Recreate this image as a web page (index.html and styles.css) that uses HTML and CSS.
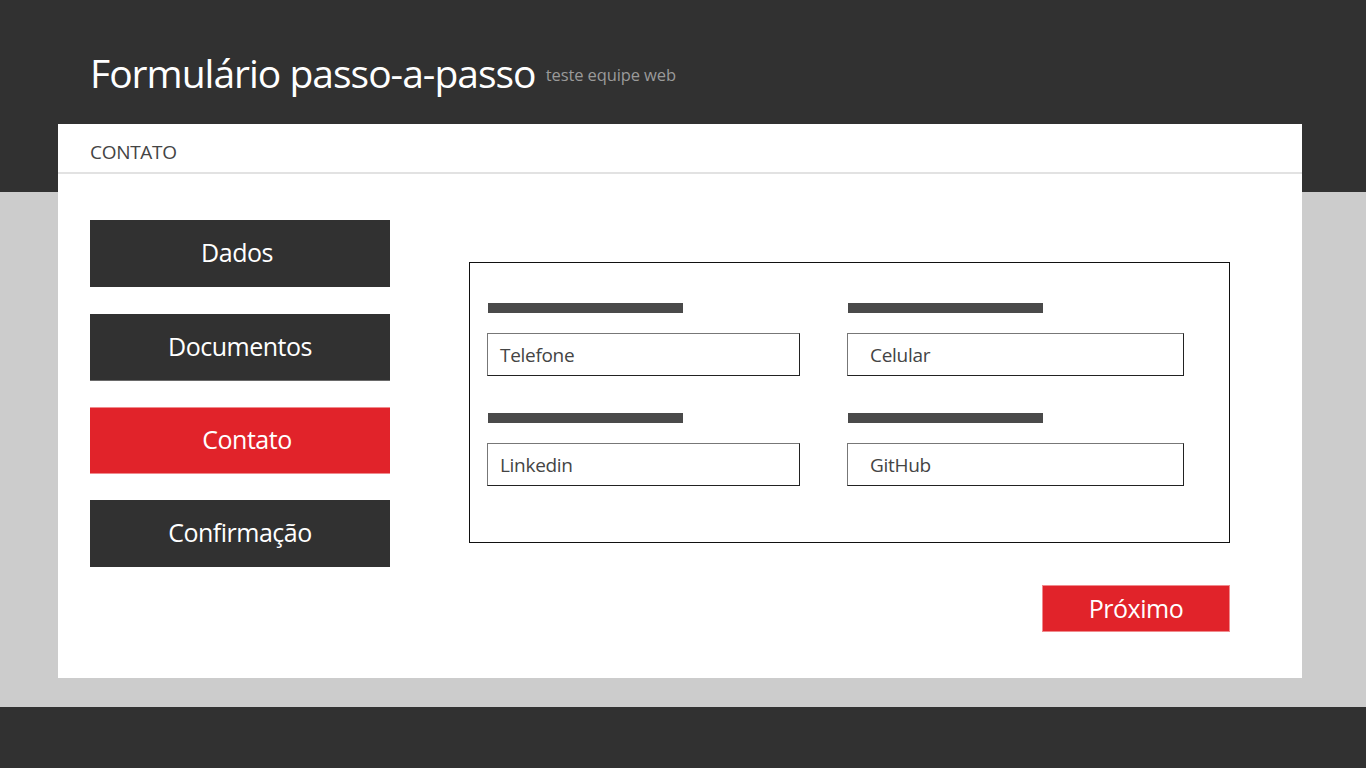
FILE: index.html
```html
<!DOCTYPE html>
<html lang="pt">
<head>
<meta charset="utf-8">
<title>Formulário passo-a-passo</title>
<link rel="stylesheet" href="styles.css">
</head>
<body>
<div class="page">
  <header class="top">
    <h1 class="title">Formulário passo-a-passo <small class="subtitle">teste equipe web</small></h1>
  </header>
  <main class="middle">
    <section class="card">
      <div class="card-head">CONTATO</div>
      <div class="card-body">
        <nav class="steps">
          <a class="step first">Dados</a>
          <a class="step">Documentos</a>
          <a class="step active">Contato</a>
          <a class="step">Confirmação</a>
        </nav>
        <div class="content">
          <form class="form-box">
            <div class="field">
              <span class="label-bar"></span>
              <div class="input">Telefone</div>
            </div>
            <div class="field wide">
              <span class="label-bar"></span>
              <div class="input">Celular</div>
            </div>
            <div class="field">
              <span class="label-bar"></span>
              <div class="input">Linkedin</div>
            </div>
            <div class="field wide">
              <span class="label-bar"></span>
              <div class="input">GitHub</div>
            </div>
          </form>
          <div class="actions">
            <button class="next" type="button">Próximo</button>
          </div>
        </div>
      </div>
    </section>
  </main>
  <footer class="bottom"></footer>
</div>
</body>
</html>
```

FILE: styles.css
```css
* { box-sizing: border-box; }
html, body { margin: 0; padding: 0; }
body {
  font-family: "Open Sans", "Noto Sans", sans-serif;
  background: #cccccc;
  width: 1366px;
  height: 768px;
  overflow: hidden;
}
.page {
  display: flex;
  flex-direction: column;
  height: 768px;
}
.top {
  background: #313131;
  height: 192px;
  flex: none;
  padding: 47px 90px 0;
}
.title {
  margin: 0;
  color: #ffffff;
  font-weight: 400;
  font-size: 39px;
  line-height: 52px;
  letter-spacing: -1px;
}
.subtitle {
  font-size: 16.5px;
  color: #9a9a9a;
  letter-spacing: -0.1px;
  margin-left: 1px;
  vertical-align: 7px;
}
.middle {
  flex: 1;
  background: #cccccc;
  padding: 0 64px 0 58px;
}
.card {
  background: #ffffff;
  margin-top: -68px;
  height: 554px;
  width: 1244px;
}
.card-head {
  height: 50px;
  border-bottom: 2px solid #e2e2e2;
  padding: 15px 0 0 32px;
  font-size: 19px;
  line-height: 26px;
  color: #444444;
  letter-spacing: -0.3px;
}
.card-body {
  display: flex;
  padding: 46px 72px 0 32px;
  gap: 79px;
}
.steps {
  width: 300px;
  flex: none;
  display: flex;
  flex-direction: column;
  gap: 26px;
}
.step {
  display: flex;
  align-items: center;
  justify-content: center;
  height: 67px;
  background: #313131;
  color: #ffffff;
  font-size: 25px;
  letter-spacing: -0.5px;
  padding-bottom: 3px;
}
.step.first { padding-right: 6px; }
.step:nth-child(2) { border-bottom: 1px solid #6a6a6a; margin-top: 1px; }
.step.active {
  background: #e1232a;
  border-top: 1px solid #f08a8d;
  border-bottom: 1px solid #f08a8d;
  padding-left: 14px;
}
.content {
  flex: 1;
  padding-top: 42px;
}
.form-box {
  margin: 0;
  border: 1px solid #111111;
  height: 281px;
  padding: 40px 0 0 17px;
  display: grid;
  grid-template-columns: 360px 337px;
  row-gap: 37px;
  align-content: start;
}
.field {
  display: flex;
  flex-direction: column;
  align-items: flex-start;
}
.label-bar {
  display: block;
  width: 195px;
  height: 10px;
  background: #4a4a4a;
  margin-left: 1px;
  margin-bottom: 20px;
}
.input {
  width: 313px;
  height: 43px;
  border: 1px solid #777777;
  border-right-color: #222222;
  border-bottom-color: #222222;
  padding: 8px 12px 0;
  font-size: 19px;
  line-height: 26px;
  color: #444444;
  letter-spacing: -0.3px;
}
.field.wide .input {
  width: 337px;
  padding-left: 22px;
}
.actions {
  display: flex;
  justify-content: flex-end;
  padding-top: 42px;
}
.next {
  width: 188px;
  height: 47px;
  border: 1px solid #f08a8d;
  background: #e1232a;
  color: #ffffff;
  font-family: inherit;
  font-size: 25px;
  letter-spacing: -0.5px;
  padding: 0 0 2px;
}
.bottom {
  background: #313131;
  height: 61px;
  flex: none;
}
```
